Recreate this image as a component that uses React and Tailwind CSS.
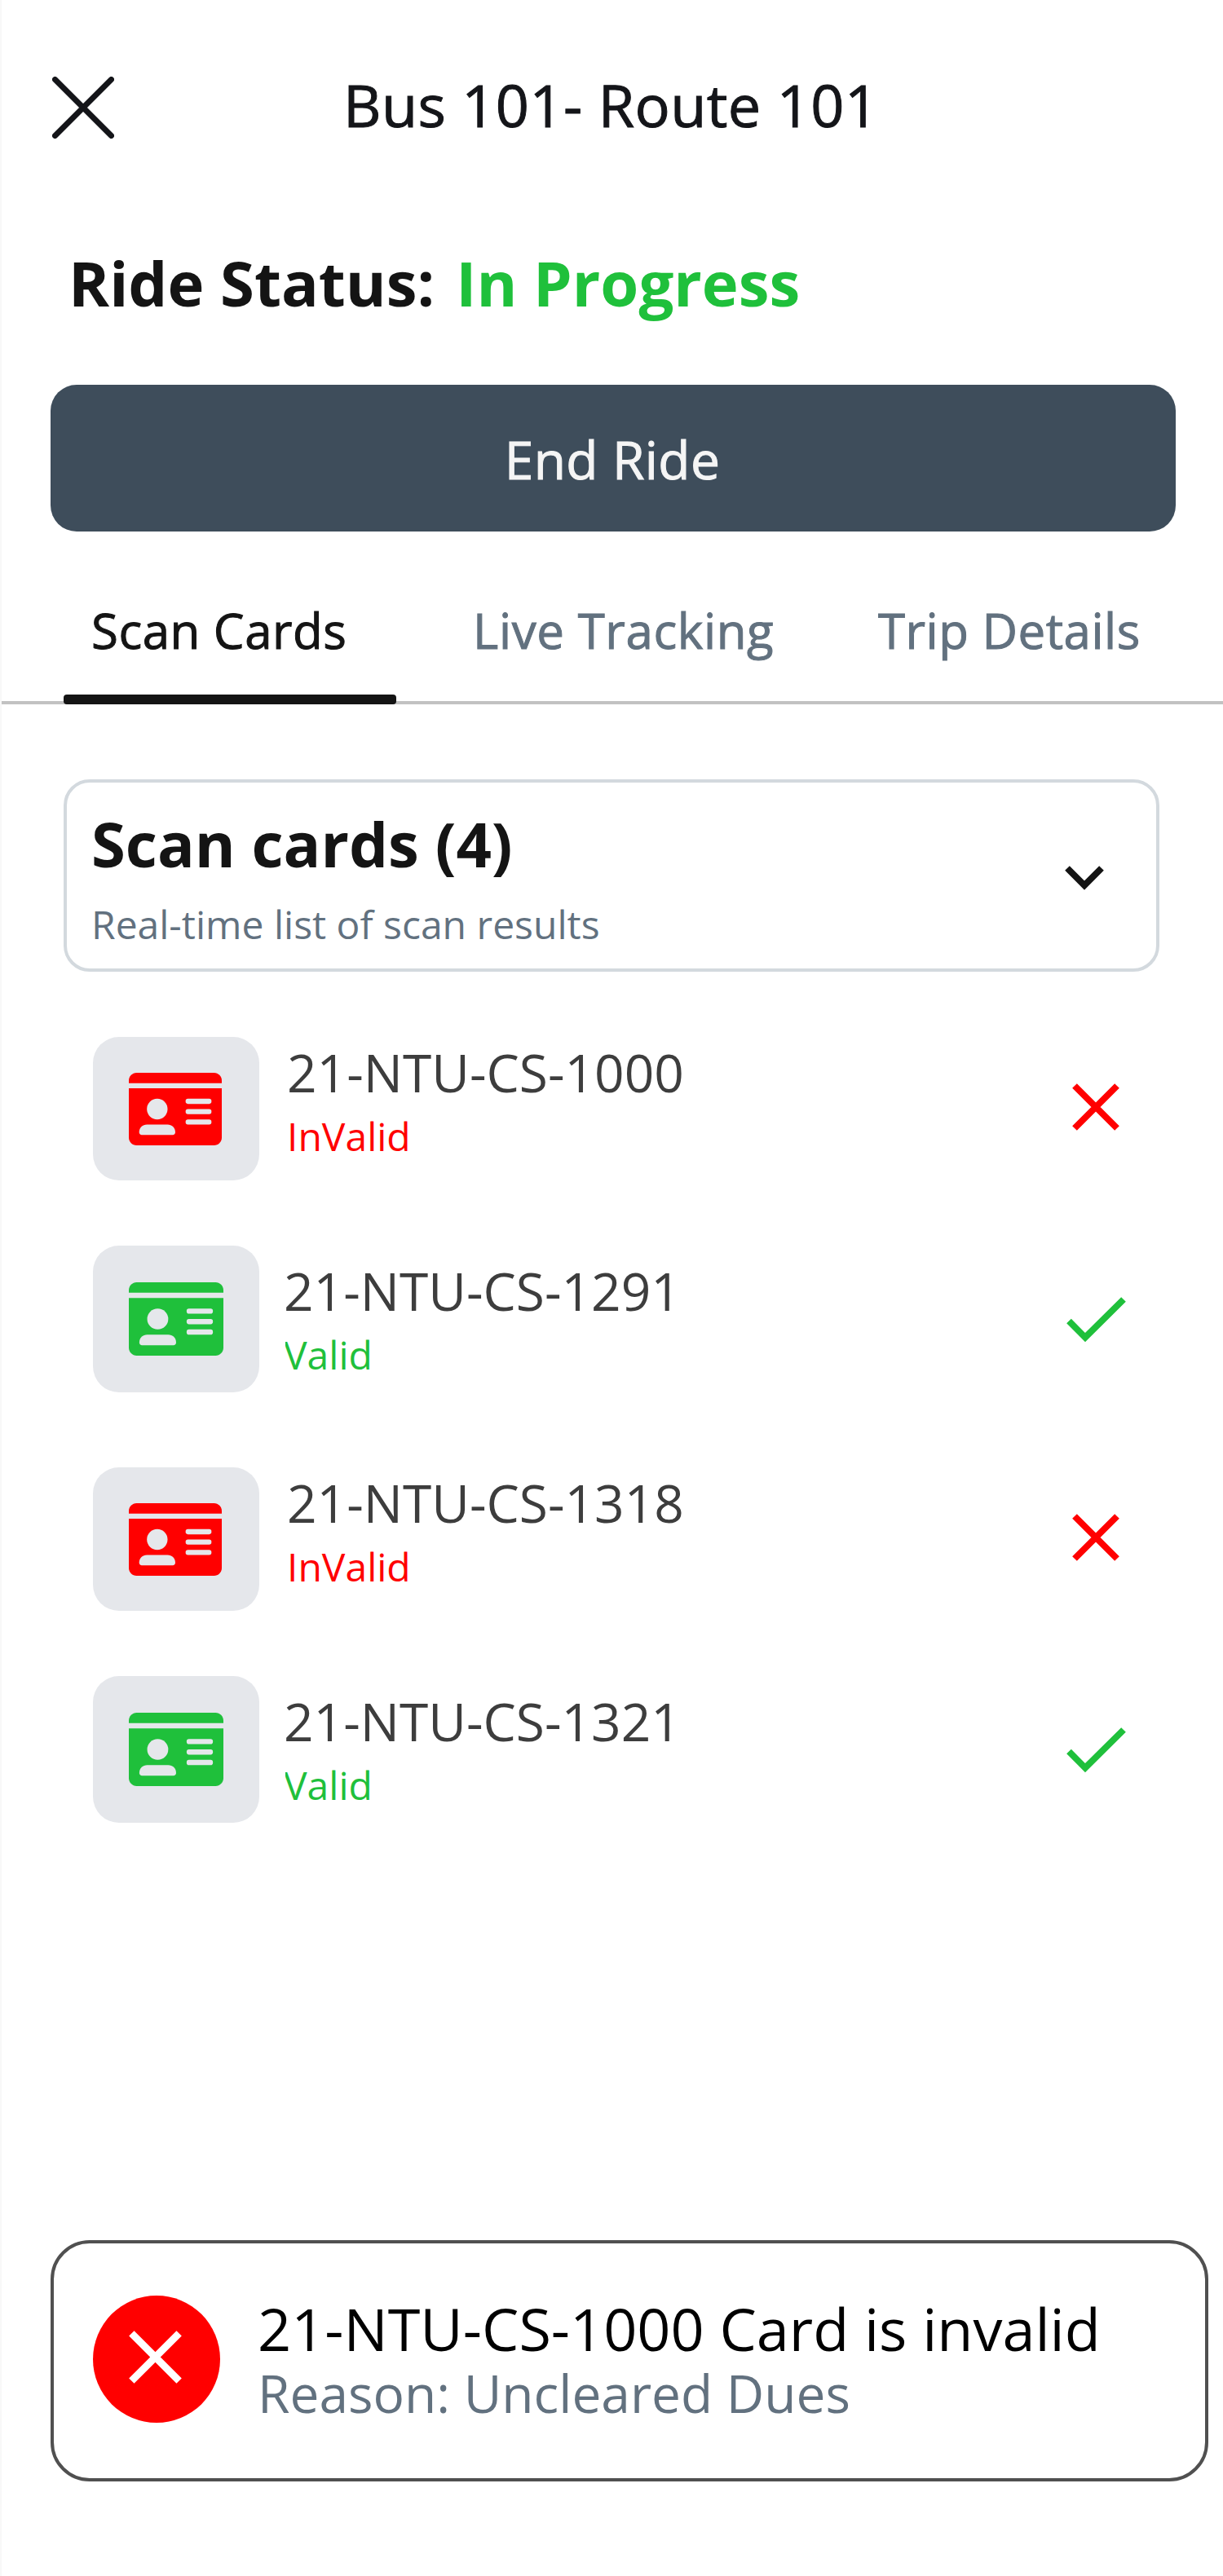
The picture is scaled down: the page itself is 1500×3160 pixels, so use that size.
const scans = [
  { id: '21-NTU-CS-1000', valid: false },
  { id: '21-NTU-CS-1291', valid: true },
  { id: '21-NTU-CS-1318', valid: false },
  { id: '21-NTU-CS-1321', valid: true },
];

function IdCardIcon({ className }) {
  return (
    <svg viewBox="0 0 576 448" preserveAspectRatio="none" className={className} fill="currentColor">
      <path d="M0 96v304c0 26.500 21.500 48 48 48h480c26.500 0 48-21.500 48-48V96H0z" />
      <path d="M528 0H48C21.500 0 0 21.500 0 48v16h576V48c0-26.500-21.500-48-48-48z" />
      <g fill="#e5e7eb">
        <circle cx="176" cy="224" r="64" />
        <path d="M80 384c-8.800 0-16-7.200-16-16 0-30 22-48 48-48h128c26 0 48 18 48 48 0 8.800-7.200 16-16 16z" />
        <rect x="352" y="160" width="160" height="32" rx="14" />
        <rect x="352" y="224" width="160" height="32" rx="14" />
        <rect x="352" y="288" width="160" height="32" rx="14" />
      </g>
    </svg>
  );
}

function CrossIcon({ className }) {
  return (
    <svg viewBox="0 0 58 58" className={className} fill="none" stroke="currentColor" strokeWidth="8">
      <path d="M3 3l52 52M55 3L3 55" />
    </svg>
  );
}

function CheckIcon({ className }) {
  return (
    <svg viewBox="0 0 73 56" className={className} fill="none" stroke="currentColor" strokeWidth="8">
      <path d="M3 29.500l20 20.200L70 3" />
    </svg>
  );
}

function ScanRow({ id, valid }) {
  return (
    <li className={valid ? 'flex h-[180px] mb-[92px] text-[#1fc03b]' : 'flex h-[176px] mb-20 text-[#ff0000]'}>
      <div className="flex h-full w-[204px] shrink-0 items-start rounded-[32px] bg-[#e5e7eb] pl-11">
        <IdCardIcon className={valid ? 'mt-[45px] h-[90px] w-[116px]' : 'mt-[44px] h-[89px] w-[114px]'} />
      </div>
      <div className={valid ? 'ml-[30px] flex-1 pt-4' : 'ml-[34px] flex-1 pt-1'}>
        <p className="text-[64px] leading-[80px] text-[#3d3d3d]">{id}</p>
        {valid ? (
          <p className="mt-1.5 ml-0.5 overflow-hidden indent-[-2px] text-[48px] leading-[64px]">Valid</p>
        ) : (
          <p className="mt-1.5 text-[48px] leading-[64px]">InValid</p>
        )}
      </div>
      {valid ? (
        <CheckIcon className="mt-[63px] mr-[119px] h-[56px] w-[73px]" />
      ) : (
        <CrossIcon className="mt-[57px] mr-[127px] h-[58px] w-[58px]" />
      )}
    </li>
  );
}

export default function App() {
  return (
    <main className="flex h-[3160px] w-[1500px] flex-col overflow-hidden border-l-2 border-[#f8f8f8] bg-white font-['Open_Sans','Noto_Sans',sans-serif] text-[#141414]">
      <header className="flex h-64 items-center pl-[62px]">
        <button aria-label="Close" className="mt-2">
          <svg viewBox="0 0 76 76" className="h-[76px] w-[76px]" fill="none" stroke="#141519" strokeWidth="7" strokeLinecap="round">
            <path d="M3.500 3.500l69 69M72.500 3.500l-69 69" />
          </svg>
        </button>
        <h1 className="ml-[281px] text-[72px] leading-[96px] font-medium tracking-[0.4px] whitespace-nowrap text-[#141519] [-webkit-text-stroke:1px_#141519]">Bus 101- Route 101</h1>
      </header>

      <p className="mt-[38px] flex pl-[82px] text-[76px] leading-[105px] font-bold whitespace-nowrap">
        <span>Ride Status:</span>
        <span className="ml-[26px] text-[#1fc03b]">In Progress</span>
      </p>

      <button className="mt-[73px] ml-[60px] h-[180px] w-[1380px] rounded-[32px] bg-[#3e4d5b] pt-1 pr-0.5 text-[64px] font-medium tracking-[0.4px] text-[#f5f5f5] [-webkit-text-stroke:1px_#f5f5f5]">
        End Ride
      </button>

      <nav className="relative flex h-[212px] shrink-0 items-start border-b-4 border-[#c2c2c2] pt-[81px] text-[60px] leading-[80px] font-medium tracking-[0.5px] whitespace-nowrap text-[#62717f] [-webkit-text-stroke:1px_currentColor]">
        <a className="ml-[110px] w-[468px] text-[#141414]">Scan Cards</a>
        <a className="w-[497px] tracking-[0.6px]">Live Tracking</a>
        <a>Trip Details</a>
        <span className="absolute -bottom-1 left-[76px] h-3 w-[408px] rounded-[4px] bg-[#141414]" />
      </nav>

      <section className="mt-[92px] ml-[76px] flex h-[236px] w-[1344px] shrink-0 items-start rounded-[32px] border-4 border-[#d3d9de] pt-[22px] pl-[30px]">
        <div className="flex-1">
          <h2 className="text-[76px] leading-[105px] font-bold">Scan cards (4)</h2>
          <p className="mt-[15px] text-[48px] leading-[64px] text-[#62717f]">Real-time list of scan results</p>
        </div>
        <svg viewBox="0 0 48 31" className="mt-20 mr-16 h-[31px] w-[48px]" fill="none" stroke="#141414" strokeWidth="8">
          <path d="M3 3l21 21L45 3" />
        </svg>
      </section>

      <ul className="mt-20 pl-28">
        {scans.map((scan) => (
          <ScanRow key={scan.id} {...scan} />
        ))}
      </ul>

      <aside className="mt-[420px] ml-[60px] flex h-[296px] w-[1420px] shrink-0 items-start rounded-[48px] border-4 border-[#505050] pl-12 whitespace-nowrap">
        <div className="mt-16 h-[156px] w-[156px] rounded-full bg-[#ff0000] pt-[43px] pl-[43.5px] text-white">
          <CrossIcon className="h-[65px] w-[65px]" />
        </div>
        <div className="ml-[46px] pt-14">
          <p className="text-[72px] leading-[96px] text-black">21-NTU-CS-1000 Card is invalid</p>
          <p className="text-[64px] leading-[64px] text-[#62717f]">Reason: Uncleared Dues</p>
        </div>
      </aside>
    </main>
  );
}
